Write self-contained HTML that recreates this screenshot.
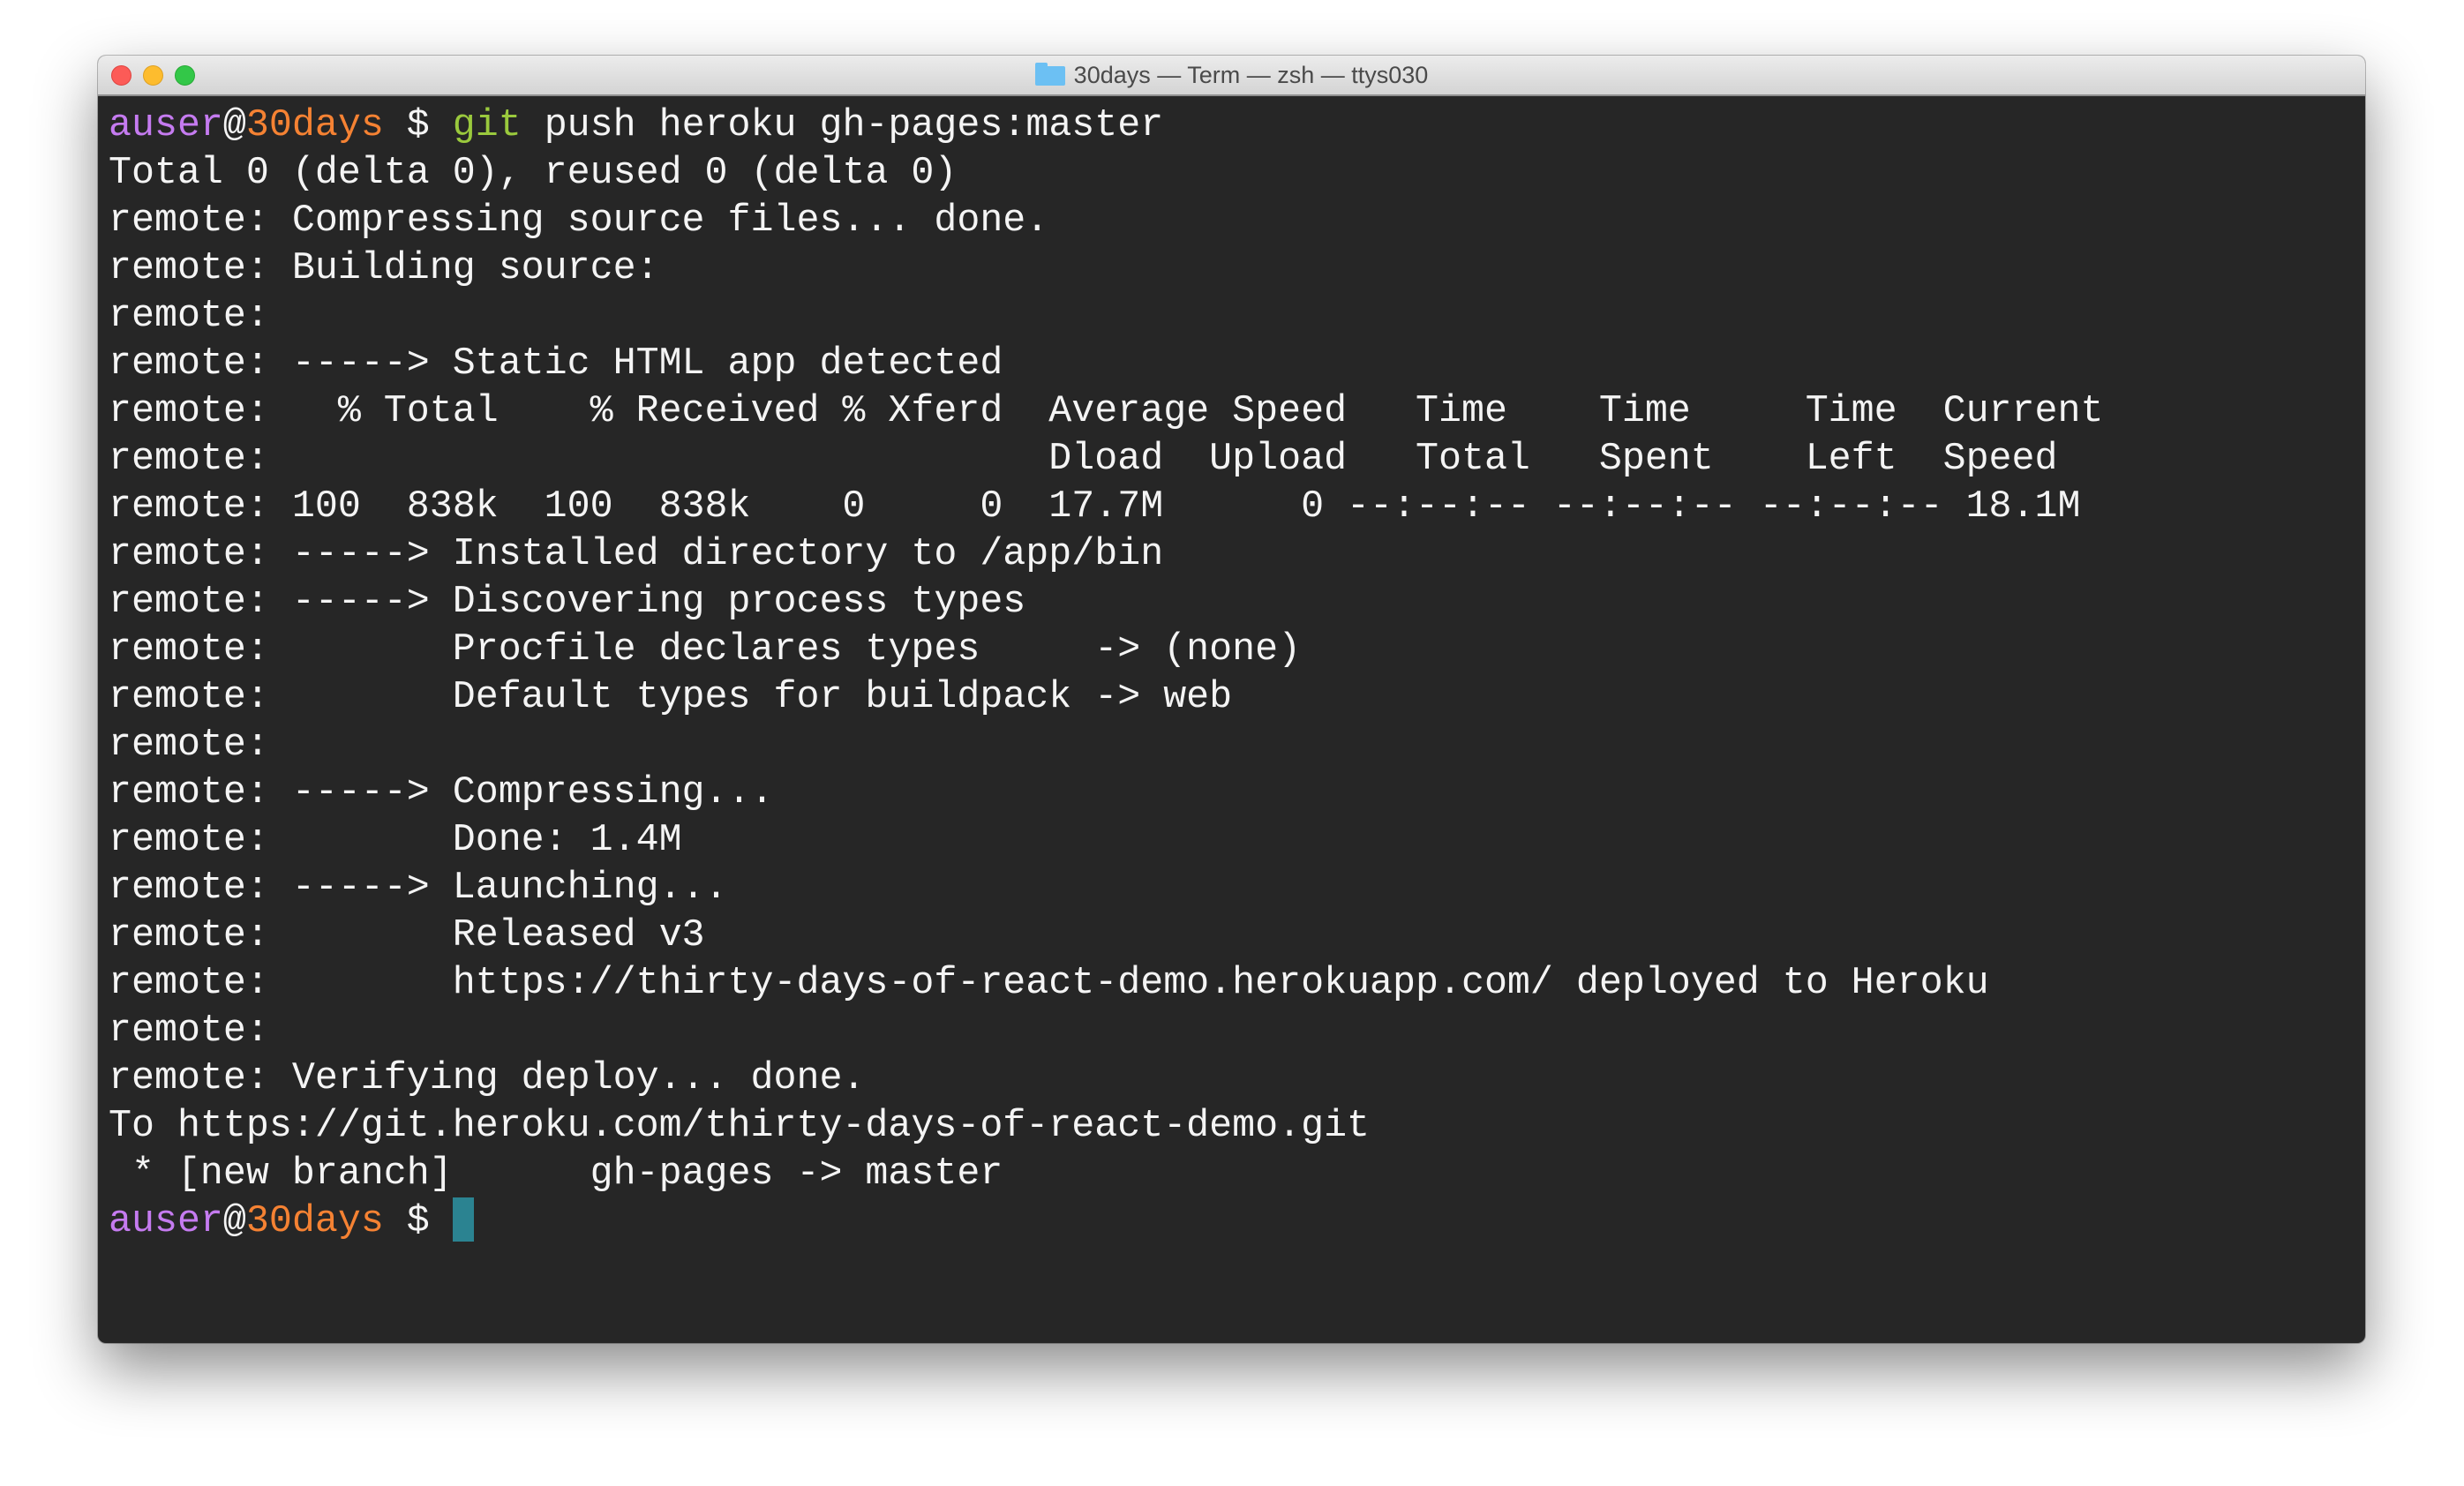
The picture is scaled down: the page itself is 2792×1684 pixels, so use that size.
<!DOCTYPE html>
<html><head><meta charset="utf-8"><style>
html,body{margin:0;padding:0;background:#fff;width:2792px;height:1684px;overflow:hidden;position:relative}
.win{position:absolute;left:111px;top:63px;width:2569px;height:1459px;border-radius:9px;background:#262626;box-shadow:0 30px 70px rgba(0,0,0,.45),0 0 0 1px rgba(0,0,0,.25);overflow:hidden}
.tb{position:absolute;left:0;top:0;width:100%;height:44px;background:linear-gradient(#ececec,#d4d4d4);border-bottom:2px solid #8e8e8e}
.dot{position:absolute;top:11px;width:21px;height:21px;border-radius:50%}
.title{position:absolute;left:0;right:0;top:7px;text-align:center;font:27px "Liberation Sans",sans-serif;color:#4a4a4a}
.folder{display:inline-block;width:34px;height:22px;vertical-align:-3px;margin-right:10px;position:relative;background:#6cc0f3;border-radius:2px}
.folder:before{content:"";position:absolute;left:0;top:-4px;width:14px;height:6px;background:#6cc0f3;border-radius:2px 2px 0 0}
pre{position:absolute;left:12px;top:53px;margin:0;font:43.3px/54px "Liberation Mono",monospace;color:#f4f4f4;white-space:pre}
.p{color:#c57bf0}.o{color:#f58233}.g{color:#9ac93d}
.cur{position:absolute;left:402px;top:1294px;width:24px;height:50px;background:#2b8391}
</style></head><body>
<div class="win">
<div class="tb">
<div class="dot" style="left:15px;background:#fc5b57;border:1px solid #de4440"></div>
<div class="dot" style="left:51px;background:#fdbc2e;border:1px solid #dea123"></div>
<div class="dot" style="left:87px;background:#33c748;border:1px solid #27aa35"></div>
<div class="title"><span class="folder"></span>30days — Term — zsh — ttys030</div>
</div>
<pre><span class="p">auser</span>@<span class="o">30days</span> $ <span class="g">git</span> push heroku gh-pages:master
Total 0 (delta 0), reused 0 (delta 0)
remote: Compressing source files... done.
remote: Building source:
remote:
remote: -----> Static HTML app detected
remote:   % Total    % Received % Xferd  Average Speed   Time    Time     Time  Current
remote:                                  Dload  Upload   Total   Spent    Left  Speed
remote: 100  838k  100  838k    0     0  17.7M      0 --:--:-- --:--:-- --:--:-- 18.1M
remote: -----> Installed directory to /app/bin
remote: -----> Discovering process types
remote:        Procfile declares types     -> (none)
remote:        Default types for buildpack -> web
remote:
remote: -----> Compressing...
remote:        Done: 1.4M
remote: -----> Launching...
remote:        Released v3
remote:        https://thirty-days-of-react-demo.herokuapp.com/ deployed to Heroku
remote:
remote: Verifying deploy... done.
To https://git.heroku.com/thirty-days-of-react-demo.git
 * [new branch]      gh-pages -> master
<span class="p">auser</span>@<span class="o">30days</span> $ </pre>
<div class="cur"></div>
</div>
</body></html>
